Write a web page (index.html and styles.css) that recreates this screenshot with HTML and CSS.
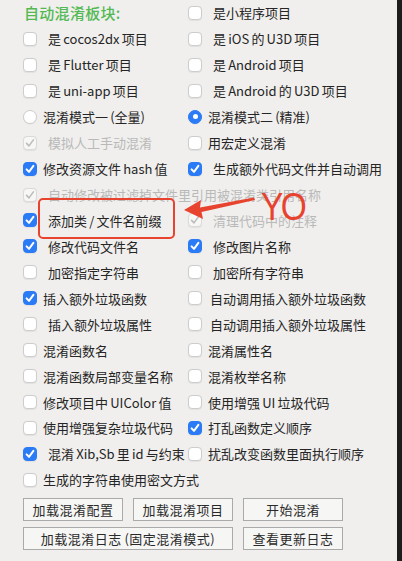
FILE: index.html
```html
<!DOCTYPE html>
<html lang="zh">
<head>
<meta charset="utf-8">
<link rel="stylesheet" href="styles.css">
</head>
<body>
<div class="panel">
  <div class="grid">
    <div class="title">自动混淆板块:</div>
    <div class="row"><span class="cb"></span><span class="lbl sp">是小程序项目</span></div>

    <div class="row"><span class="cb"></span><span class="lbl sp">是 cocos2dx 项目</span></div>
    <div class="row"><span class="cb"></span><span class="lbl sp">是 iOS 的 U3D 项目</span></div>

    <div class="row"><span class="cb"></span><span class="lbl sp">是 Flutter 项目</span></div>
    <div class="row"><span class="cb"></span><span class="lbl sp">是 Android 项目</span></div>

    <div class="row"><span class="cb"></span><span class="lbl sp">是 uni-app 项目</span></div>
    <div class="row"><span class="cb"></span><span class="lbl sp">是 Android 的 U3D 项目</span></div>

    <div class="row"><span class="rb"></span><span class="lbl">混淆模式一 (全量)</span></div>
    <div class="row"><span class="rb on"></span><span class="lbl">混淆模式二 (精准)</span></div>

    <div class="row dis"><span class="cb on"><svg viewBox="0 0 14 14"><path d="M3.6 7.4 L6 9.9 L10.4 3.9"/></svg></span><span class="lbl sp">模拟人工手动混淆</span></div>
    <div class="row"><span class="cb"></span><span class="lbl">用宏定义混淆</span></div>

    <div class="row"><span class="cb on"><svg viewBox="0 0 14 14"><path d="M3.6 7.4 L6 9.9 L10.4 3.9"/></svg></span><span class="lbl">修改资源文件 hash 值</span></div>
    <div class="row"><span class="cb on"><svg viewBox="0 0 14 14"><path d="M3.6 7.4 L6 9.9 L10.4 3.9"/></svg></span><span class="lbl sp">生成额外代码文件并自动调用</span></div>

    <div class="row dis wide"><span class="cb on"><svg viewBox="0 0 14 14"><path d="M3.6 7.4 L6 9.9 L10.4 3.9"/></svg></span><span class="lbl sp">自动修改被过滤掉文件里引用被混淆类引用名称</span></div>

    <div class="row"><span class="cb on"><svg viewBox="0 0 14 14"><path d="M3.6 7.4 L6 9.9 L10.4 3.9"/></svg></span><span class="lbl sp">添加类 / 文件名前缀</span></div>
    <div class="row dis"><span class="cb on"><svg viewBox="0 0 14 14"><path d="M3.6 7.4 L6 9.9 L10.4 3.9"/></svg></span><span class="lbl sp">清理代码中的注释</span></div>

    <div class="row"><span class="cb on"><svg viewBox="0 0 14 14"><path d="M3.6 7.4 L6 9.9 L10.4 3.9"/></svg></span><span class="lbl sp">修改代码文件名</span></div>
    <div class="row"><span class="cb on"><svg viewBox="0 0 14 14"><path d="M3.6 7.4 L6 9.9 L10.4 3.9"/></svg></span><span class="lbl sp">修改图片名称</span></div>

    <div class="row"><span class="cb"></span><span class="lbl sp">加密指定字符串</span></div>
    <div class="row"><span class="cb"></span><span class="lbl sp">加密所有字符串</span></div>

    <div class="row"><span class="cb on"><svg viewBox="0 0 14 14"><path d="M3.6 7.4 L6 9.9 L10.4 3.9"/></svg></span><span class="lbl">插入额外垃圾函数</span></div>
    <div class="row"><span class="cb"></span><span class="lbl sm">自动调用插入额外垃圾函数</span></div>

    <div class="row"><span class="cb"></span><span class="lbl sp">插入额外垃圾属性</span></div>
    <div class="row"><span class="cb"></span><span class="lbl sm">自动调用插入额外垃圾属性</span></div>

    <div class="row"><span class="cb"></span><span class="lbl">混淆函数名</span></div>
    <div class="row"><span class="cb"></span><span class="lbl">混淆属性名</span></div>

    <div class="row"><span class="cb"></span><span class="lbl">混淆函数局部变量名称</span></div>
    <div class="row"><span class="cb"></span><span class="lbl">混淆枚举名称</span></div>

    <div class="row"><span class="cb"></span><span class="lbl">修改项目中 UIColor 值</span></div>
    <div class="row"><span class="cb"></span><span class="lbl">使用增强 UI 垃圾代码</span></div>

    <div class="row"><span class="cb"></span><span class="lbl">使用增强复杂垃圾代码</span></div>
    <div class="row"><span class="cb on"><svg viewBox="0 0 14 14"><path d="M3.6 7.4 L6 9.9 L10.4 3.9"/></svg></span><span class="lbl">打乱函数定义顺序</span></div>

    <div class="row"><span class="cb on"><svg viewBox="0 0 14 14"><path d="M3.6 7.4 L6 9.9 L10.4 3.9"/></svg></span><span class="lbl sp">混淆 Xib,Sb 里 id 与约束</span></div>
    <div class="row"><span class="cb"></span><span class="lbl">扰乱改变函数里面执行顺序</span></div>

    <div class="row wide"><span class="cb"></span><span class="lbl">生成的字符串使用密文方式</span></div>
  </div>

  <div class="btns">
    <button class="btn">加载混淆配置</button>
    <button class="btn">加载混淆项目</button>
    <button class="btn">开始混淆</button>
    <button class="btn two">加载混淆日志 (固定混淆模式)</button>
    <button class="btn">查看更新日志</button>
  </div>

  <div class="note">
    <div class="box"></div>
    <svg class="arrow" viewBox="0 0 80 30" width="80" height="30">
      <polygon points="0,13 17,3 16,10.5 70,0.5 71,3 17.5,15 19,22"/>
    </svg>
    <div class="yo">YO</div>
  </div>
</div>
<div class="edge"></div>
</body>
</html>
```

FILE: styles.css
```css
html, body {
  margin: 0;
  padding: 0;
  height: 100%;
}
body {
  display: flex;
  background: #f0efed;
  font-family: "Noto Sans CJK SC", "Noto Sans", sans-serif;
  font-size: 13px;
  color: #252525;
  overflow: hidden;
}
.panel {
  flex: 1;
  position: relative;
  padding-left: 23px;
}
.edge {
  width: 5px;
  background: #1d1d1d;
}
.grid {
  display: grid;
  grid-template-columns: 165px 1fr;
  grid-auto-rows: 25.95px;
}
.title {
  display: flex;
  align-items: center;
  color: #53b953;
  font-size: 15px;
  font-weight: 500;
  letter-spacing: 0.3px;
  padding-left: 1px;
}
.row {
  display: flex;
  align-items: center;
  white-space: pre;
}
.row.wide {
  grid-column: 1 / span 2;
}
.lbl {
  margin-left: 6px;
  line-height: 1;
  word-spacing: -0.7px;
}
.lbl.sp { padding-left: 5px; }
.lbl.sm { padding-left: 2px; }
.dis .lbl { color: #b9b9b9; }

.cb, .rb {
  flex: none;
  width: 14px;
  height: 14px;
  box-sizing: border-box;
  background: #fff;
  border: 1px solid #cdcdcd;
  border-radius: 4px;
  box-shadow: 0 0.5px 1px rgba(0,0,0,0.06);
  display: flex;
  align-items: center;
  justify-content: center;
}
.rb { border-radius: 50%; }
.cb.on {
  background: #2a7bf5;
  border-color: #2a7bf5;
}
.cb svg {
  width: 14px;
  height: 14px;
  margin: -1px;
}
.cb svg path {
  fill: none;
  stroke: #fff;
  stroke-width: 2;
  stroke-linecap: round;
  stroke-linejoin: round;
}
.dis .cb.on {
  background: #f7f7f6;
  border-color: #dadada;
}
.dis .cb svg path { stroke: #bcbcbc; stroke-width: 1.6; }
.rb.on {
  background: #2a7bf5;
  border-color: #2a7bf5;
}
.rb.on::after {
  content: "";
  width: 5px;
  height: 5px;
  border-radius: 50%;
  background: #fff;
}

.btns {
  display: grid;
  grid-template-columns: 100px 100px 100px;
  column-gap: 10px;
  row-gap: 6px;
  margin-top: 5px;
}
.btn {
  height: 23px;
  margin: 0;
  padding: 0;
  background: #f6f6f5;
  border: 1px solid #aaaaaa;
  border-radius: 0;
  font-family: "Noto Sans CJK SC", "Noto Sans", sans-serif;
  font-size: 13px;
  color: #2a2a2a;
  letter-spacing: 0.5px;
  word-spacing: -0.7px;
  white-space: pre;
}
.btn.two { grid-column: span 2; }

.note .box {
  position: absolute;
  left: 38px;
  top: 198px;
  width: 133px;
  height: 37px;
  border: 2px solid #e8432f;
  border-radius: 5px;
}
.note .arrow {
  position: absolute;
  left: 184px;
  top: 197px;
}
.note .arrow polygon { fill: #e8432f; }
.note .yo {
  position: absolute;
  left: 261px;
  top: 183px;
  font-family: "Liberation Sans", sans-serif;
  font-size: 38px;
  line-height: 48px;
  color: #e8432f;
  letter-spacing: -3px;
  transform: scaleX(0.88);
  transform-origin: left center;
}
```
